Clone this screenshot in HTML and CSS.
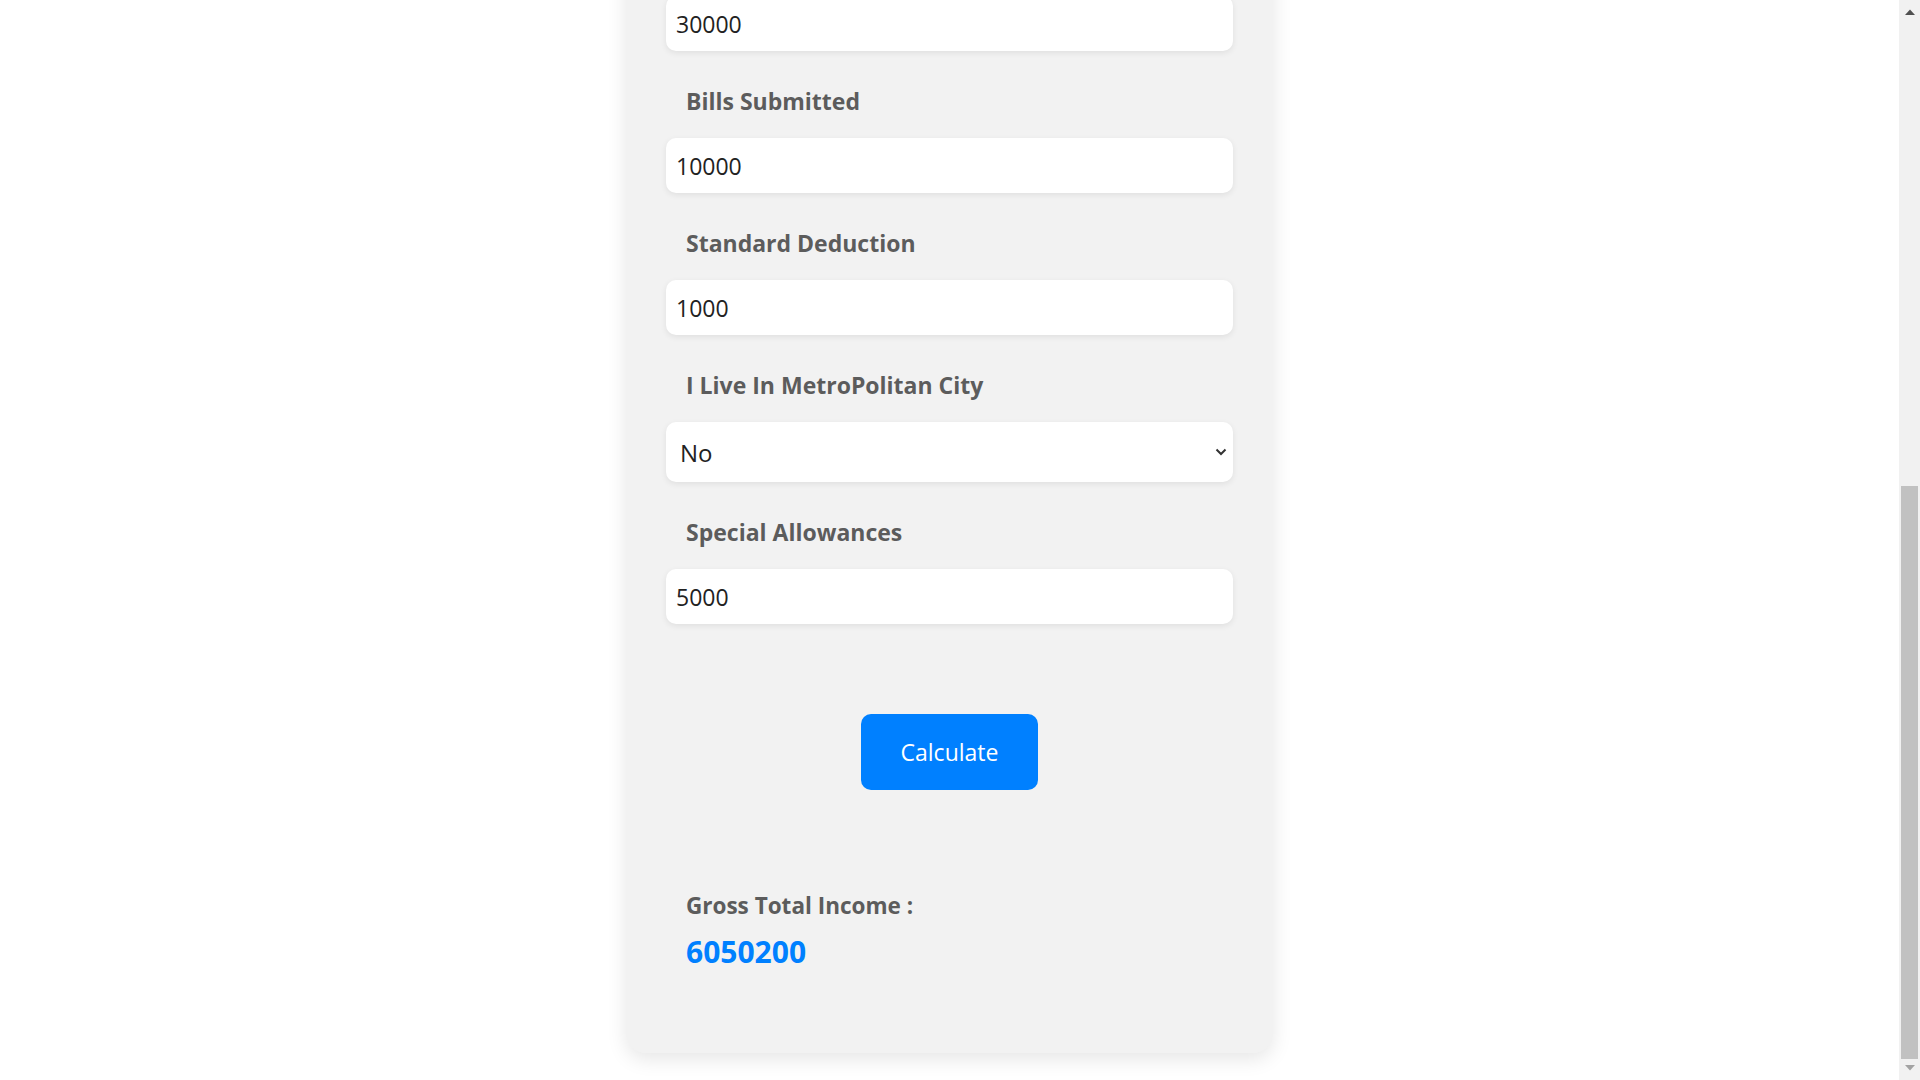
FILE: index.html
```html
<!DOCTYPE html>
<html lang="en">
<head>
<meta charset="utf-8">
<title>Income Calculator</title>
<link rel="stylesheet" href="styles.css">
</head>
<body>
<main class="page">
  <form class="card">
    <h1 class="title">Gross Income Calculator</h1>

    <div class="field">
      <label class="label">Basic Salary</label>
      <input class="input" type="text" value="6000000">
    </div>
    <div class="field">
      <label class="label">Dearness Allowance</label>
      <input class="input" type="text" value="20200">
    </div>
    <div class="field">
      <label class="label">HRA Received</label>
      <input class="input" type="text" value="50000">
    </div>
    <div class="field">
      <label class="label">Rent Paid</label>
      <input class="input" type="text" value="40000">
    </div>
    <div class="field">
      <label class="label">LTA Received</label>
      <input class="input" type="text" value="30000">
    </div>
    <div class="field">
      <label class="label">Bills Submitted</label>
      <input class="input" type="text" value="10000">
    </div>
    <div class="field">
      <label class="label">Standard Deduction</label>
      <input class="input" type="text" value="1000">
    </div>
    <div class="field">
      <label class="label">I Live In MetroPolitan City</label>
      <div class="select-wrap">
        <select class="select">
          <option>No</option>
          <option>Yes</option>
        </select>
        <svg class="chevron" width="12" height="8" viewBox="0 0 12 8" aria-hidden="true">
          <path d="M1.5 1.5 L6 6 L10.5 1.5" fill="none" stroke="#333" stroke-width="2"/>
        </svg>
      </div>
    </div>
    <div class="field">
      <label class="label">Special Allowances</label>
      <input class="input" type="text" value="5000">
    </div>

    <div class="actions">
      <button class="button" type="button">Calculate</button>
    </div>

    <div class="result">
      <div class="result-label">Gross Total Income :</div>
      <div class="result-value">6050200</div>
    </div>
  </form>
</main>

<div class="scrollbar" aria-hidden="true">
  <svg class="sb-arrow sb-up" width="10" height="6" viewBox="0 0 10 6"><path d="M0 6 L5 0.5 L10 6 Z" fill="#505050"/></svg>
  <div class="sb-thumb"></div>
  <svg class="sb-arrow sb-down" width="10" height="6" viewBox="0 0 10 6"><path d="M0 0 L5 5.5 L10 0 Z" fill="#a3a3a3"/></svg>
</div>

<script src="script.js"></script>
</body>
</html>
```

FILE: styles.css
```css
html, body {
  margin: 0;
  padding: 0;
  background: #ffffff;
}

body {
  font-family: "Open Sans", "Noto Sans", sans-serif;
  color: #222;
  padding-right: 21px;
}

.page {
  padding: 28px 0 27px;
}

.card {
  width: 647px;
  box-sizing: border-box;
  margin: 0 auto;
  padding: 40px 40px 81px;
  background: #f2f2f2;
  border-radius: 20px;
  box-shadow: 0 6px 20px rgba(0, 0, 0, 0.1);
}

.title {
  margin: 0 0 62px;
  font-size: 34px;
  line-height: 60px;
  text-align: center;
  color: #444;
}

.field {
  display: flex;
  flex-direction: column;
}

.label {
  display: block;
  margin: 35px 0 22px;
  padding-left: 20px;
  font-size: 23px;
  line-height: 30px;
  font-weight: 700;
  color: #5c5c5c;
}

.input,
.select {
  display: block;
  width: 100%;
  box-sizing: border-box;
  height: 55px;
  margin: 0;
  padding: 0 10px;
  border: none;
  border-radius: 10px;
  background: #fff;
  box-shadow: 0 2px 6px rgba(0, 0, 0, 0.08);
  font-family: "Open Sans", "Noto Sans", sans-serif;
  font-size: 23px;
  color: #222;
  outline: none;
}

.select-wrap {
  position: relative;
}

.select {
  height: 60px;
  padding-left: 14px;
  font-size: 24px;
  appearance: none;
  -webkit-appearance: none;
}

.chevron {
  position: absolute;
  right: 6px;
  top: 26px;
  pointer-events: none;
}

.actions {
  display: flex;
  justify-content: center;
  margin-top: 90px;
}

.button {
  height: 76px;
  padding: 0 40px;
  border: none;
  border-radius: 10px;
  background: #0080ff;
  color: #fff;
  font-family: "Open Sans", "Noto Sans", sans-serif;
  font-size: 23px;
  cursor: pointer;
}

.result {
  margin-top: 100px;
  padding-left: 20px;
}

.result-label {
  font-size: 22.5px;
  line-height: 32px;
  font-weight: 700;
  color: #5c5c5c;
}

.result-value {
  margin-top: 10px;
  font-size: 30px;
  line-height: 40px;
  font-weight: 700;
  color: #0080ff;
}

/* window scrollbar as it appears in the screenshot */
.scrollbar {
  position: fixed;
  top: 0;
  right: 0;
  width: 21px;
  height: 100vh;
  background: #f1f1f1;
}

.sb-arrow {
  position: absolute;
  left: 6px;
}

.sb-up {
  top: 9px;
}

.sb-down {
  bottom: 9px;
}

.sb-thumb {
  position: absolute;
  left: 2px;
  right: 2px;
  top: 486px;
  height: 573px;
  background: #c1c1c1;
}
```

FILE: script.js
```js
window.scrollTo(0, document.documentElement.scrollHeight);
window.addEventListener('load', function () {
  window.scrollTo(0, document.documentElement.scrollHeight);
});
```
